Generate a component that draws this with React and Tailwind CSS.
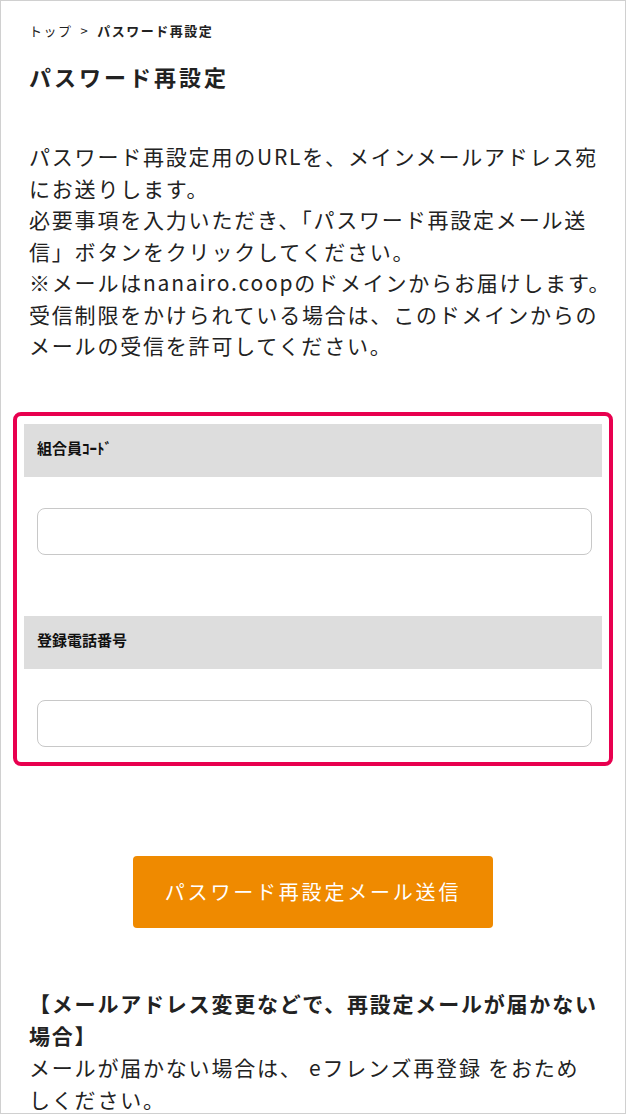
import React from "react";

const jp = { fontFamily: '"Noto Sans CJK JP", "Noto Sans", sans-serif' };

function Field({ label }) {
  return (
    <div>
      <div className="h-[53px] bg-[#dddddd] flex items-center px-[13px] pb-[4px]">
        <span className="text-[15px] font-bold text-[#111]">{label}</span>
      </div>
      <div className="pt-[31px] pl-[13px] pr-[10px]">
        <input
          type="text"
          className="block w-full h-[47px] border border-[#c8c8c8] rounded-[8px] bg-white outline-none"
        />
      </div>
    </div>
  );
}

export default function App() {
  return (
    <div
      style={jp}
      className="w-[626px] h-[1114px] overflow-hidden bg-white border border-[#d0d0d0] text-[#222] px-[12px]"
    >
      <nav className="pt-[20px] px-[16px] text-[13px] leading-[20px] tracking-[1.5px]">
        <span>トップ</span>
        <span className="mx-[8px]">&gt;</span>
        <span className="font-bold">パスワード再設定</span>
      </nav>

      <h1 className="mt-[19px] px-[16px] text-[22px] leading-[32px] font-bold tracking-[3px]">
        パスワード再設定
      </h1>

      <p className="mt-[49px] px-[16px] text-[21px] leading-[31.5px] tracking-[1.8px] whitespace-nowrap">
        パスワード再設定用のURLを、メインメールアドレス宛
        <br />
        にお送りします。
        <br />
        必要事項を入力いただき、「パスワード再設定メール送
        <br />
        信」ボタンをクリックしてください。
        <br />
        ※メールはnanairo.coopのドメインからお届けします。
        <br />
        受信制限をかけられている場合は、このドメインからの
        <br />
        メールの受信を許可してください。
      </p>

      <div className="mt-[50px] border-4 border-[#e8004f] rounded-[8px] px-[7px] pt-[8px] pb-[15px] flex flex-col gap-[61px]">
        <Field label="組合員ｺｰﾄﾞ" />
        <Field label="登録電話番号" />
      </div>

      <div className="mt-[90px] flex justify-center">
        <button
          type="button"
          className="w-[360px] h-[72px] bg-[#ef8a00] rounded-[4px] text-white text-[20px] tracking-[2.8px]"
        >
          パスワード再設定メール送信
        </button>
      </div>

      <div className="mt-[59px] px-[16px] text-[21px] leading-[32px] tracking-[1.8px] whitespace-nowrap">
        <p className="font-bold">
          【メールアドレス変更などで、再設定メールが届かない
          <br />
          場合】
        </p>
        <p>
          メールが届かない場合は、 eフレンズ再登録 をおため
          <br />
          しください。
        </p>
      </div>
    </div>
  );
}
